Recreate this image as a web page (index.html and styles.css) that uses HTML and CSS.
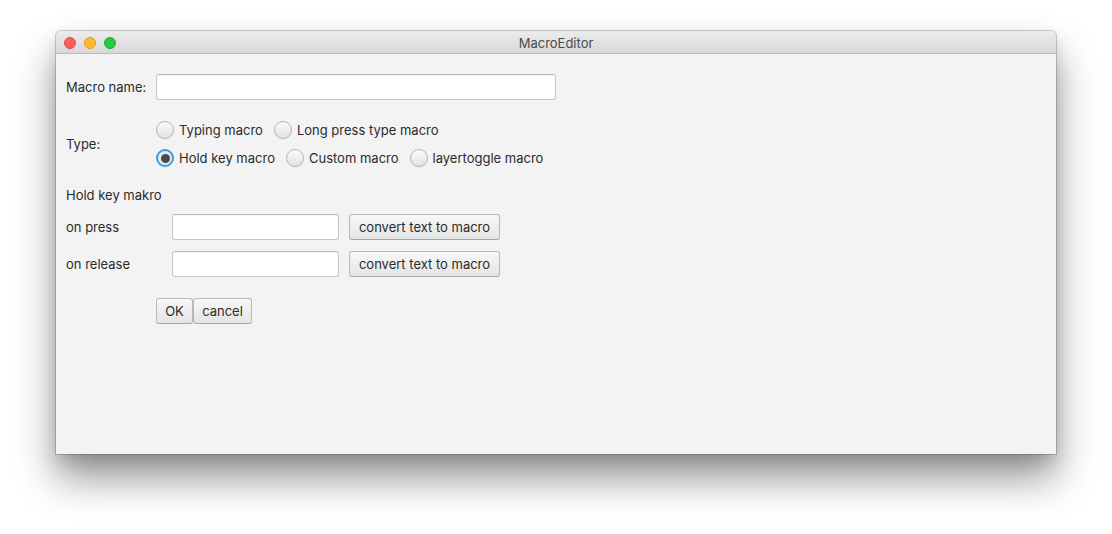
FILE: index.html
```html
<!DOCTYPE html>
<html>
<head>
<meta charset="utf-8">
<title>MacroEditor</title>
<link rel="stylesheet" href="styles.css">
</head>
<body>
<div class="window">
  <div class="titlebar">
    <div class="lights">
      <span class="light red"></span>
      <span class="light yellow"></span>
      <span class="light green"></span>
    </div>
    <div class="title">MacroEditor</div>
  </div>
  <div class="content">
    <div class="row name-row">
      <label class="label">Macro name:</label>
      <input class="field name-field" type="text">
    </div>
    <div class="row type-row">
      <label class="label">Type:</label>
      <div class="radio-group">
        <div class="radio-line">
          <span class="radio"><span class="circle"></span>Typing macro</span>
          <span class="radio"><span class="circle"></span>Long press type macro</span>
        </div>
        <div class="radio-line">
          <span class="radio"><span class="circle checked"></span>Hold key macro</span>
          <span class="radio"><span class="circle"></span>Custom macro</span>
          <span class="radio"><span class="circle"></span>layertoggle macro</span>
        </div>
      </div>
    </div>
    <div class="section-title">Hold key makro</div>
    <div class="key-row press">
      <label class="key-label">on press</label>
      <input class="field key-field" type="text">
      <button class="btn convert">convert text to macro</button>
    </div>
    <div class="key-row release">
      <label class="key-label">on release</label>
      <input class="field key-field" type="text">
      <button class="btn convert">convert text to macro</button>
    </div>
    <div class="actions">
      <button class="btn ok">OK</button>
      <button class="btn cancel">cancel</button>
    </div>
  </div>
</div>
</body>
</html>
```

FILE: styles.css
```css
* { box-sizing: border-box; }
html, body {
  margin: 0;
  padding: 0;
  background: #ffffff;
  width: 1112px;
  height: 534px;
  overflow: hidden;
}
body {
  font-family: Inter, "Liberation Sans", Arial, sans-serif;
  font-size: 13px;
  color: #2b2b2b;
  padding-top: 31px;
  padding-left: 56px;
}
.window {
  width: 1000px;
  height: 423px;
  background: #f3f3f3;
  border-radius: 5px 5px 0 0;
  box-shadow: 0 0 0 1px rgba(0,0,0,0.18), 0 24px 40px rgba(0,0,0,0.42), 0 8px 16px rgba(0,0,0,0.12);
  display: flex;
  flex-direction: column;
}
.titlebar {
  height: 23px;
  flex: none;
  border-radius: 5px 5px 0 0;
  background: linear-gradient(#ececec, #d8d8d8);
  border-bottom: 1px solid #b9b9b9;
  display: flex;
  align-items: center;
  position: relative;
  padding-top: 1px;
}
.lights {
  display: flex;
  gap: 8px;
  padding-left: 8px;
}
.light {
  width: 12px;
  height: 12px;
  border-radius: 50%;
  display: block;
}
.light.red { background: #fc5f57; border: 0.5px solid #e04a43; }
.light.yellow { background: #fdbc2e; border: 0.5px solid #de9f20; }
.light.green { background: #28c840; border: 0.5px solid #1ea932; }
.title {
  position: absolute;
  left: 0;
  right: 0;
  top: 1px;
  height: 22px;
  line-height: 22px;
  text-align: center;
  font-size: 13px;
  color: #4a4a4a;
}
.content {
  padding: 20px 10px 0 10px;
  display: flex;
  flex-direction: column;
}
.row {
  display: flex;
  align-items: center;
}
.label {
  width: 90px;
  flex: none;
}
.field {
  height: 26px;
  background: #ffffff;
  border: 1px solid #c6c6c6;
  border-top-color: #b8b8b8;
  border-radius: 3px;
  box-shadow: inset 0 1px 1px rgba(0,0,0,0.04);
  font: inherit;
  padding: 0 6px;
  outline: none;
  margin: 0;
}
.name-field { width: 400px; }
.type-row { margin-top: 20px; }
.radio-group {
  display: flex;
  flex-direction: column;
  gap: 8px;
}
.radio-line {
  display: flex;
  gap: 11px;
}
.radio {
  display: flex;
  align-items: center;
  height: 20px;
  gap: 5px;
}
.circle {
  width: 18px;
  height: 18px;
  border-radius: 50%;
  border: 1px solid #b4b4b4;
  background: linear-gradient(#fbfbfb, #e2e2e2);
  box-shadow: 0 1px 0 rgba(0,0,0,0.03);
  display: flex;
  align-items: center;
  justify-content: center;
}
.circle.checked {
  border: 2px solid #36a2e0;
  background: #ebebeb;
}
.circle.checked::after {
  content: "";
  width: 9px;
  height: 9px;
  border-radius: 50%;
  background: #4a4a4a;
}
.section-title {
  margin-top: 19px;
  line-height: 16px;
}
.key-row {
  display: flex;
  align-items: center;
  margin-top: 11px;
}
.key-label { width: 106px; flex: none; }
.key-field { width: 167px; }
.btn {
  height: 26px;
  font: inherit;
  color: #2b2b2b;
  background: linear-gradient(#f8f8f8, #e4e4e4);
  border: 1px solid #b8b8b8;
  border-bottom-color: #a8a8a8;
  border-radius: 3px;
  padding: 0 8px;
  margin: 0;
}
.convert { width: 151px; margin-left: 10px; padding: 0; }
.actions {
  display: flex;
  margin-top: 21px;
  margin-left: 90px;
}
.ok { width: 37px; padding: 0; }
.cancel { width: 59px; padding: 0; margin-left: 0; }
```
